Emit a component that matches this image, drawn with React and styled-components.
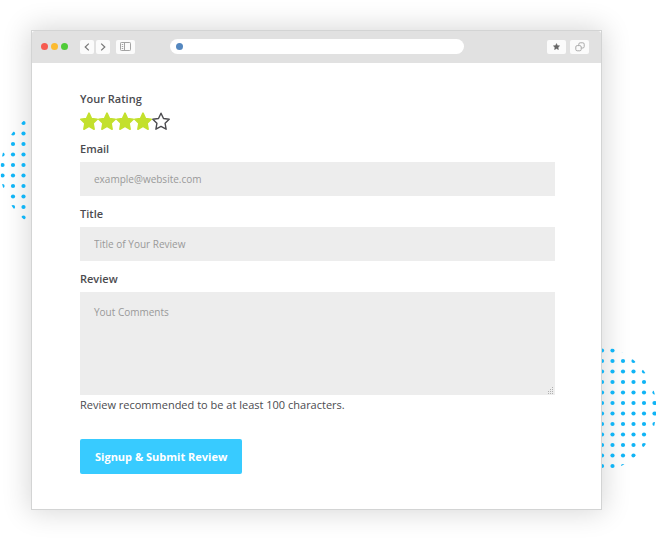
import React, { useState } from "react";
import styled, { createGlobalStyle } from "styled-components";

const GlobalStyle = createGlobalStyle`
  * {
    box-sizing: border-box;
  }

  body {
    margin: 0;
    background: #fff;
    color: #4b4b4f;
    font-family: "Open Sans", "Noto Sans", sans-serif;
    font-size: 11px;
    line-height: 16px;
  }

  button,
  input,
  textarea {
    font-family: inherit;
  }
`;

const Page = styled.main`
  padding: 30px 54px 30px 31px;
  overflow: hidden;
`;

const Frame = styled.div`
  position: relative;
  box-shadow: 0 0 26px 2px rgba(0, 0, 0, 0.16);
`;

const StyledDots = styled.svg`
  position: absolute;
  width: 128px;
  height: 128px;
  ${(props) =>
    props.$side === "left"
      ? "left: -31px; top: 76px;"
      : "right: -55px; bottom: 37px;"}
`;

const BrowserWindow = styled.section`
  position: relative;
  background: #fff;
  border: 1px solid #d3d4d4;
`;

const Toolbar = styled.header`
  display: flex;
  align-items: center;
  height: 32px;
  padding: 0 12px 1px 9px;
  background: #e1e1e1;
  border-radius: 3px 3px 0 0;
`;

const Lights = styled.div`
  display: flex;
  gap: 3px;
  margin-right: 12px;
`;

const Light = styled.span`
  width: 7px;
  height: 7px;
  border-radius: 50%;
  background: ${(props) => props.$color};
`;

const ToolGroup = styled.div`
  display: flex;
  gap: ${(props) => props.$gap}px;
  margin-right: ${(props) => props.$after || 0}px;
`;

const ToolButton = styled.button`
  display: flex;
  align-items: center;
  justify-content: center;
  width: ${(props) => (props.$wide ? 19 : 14)}px;
  height: 14px;
  padding: 0;
  border: 0;
  border-radius: 2px;
  background: #fbfbfb;
  color: #777;
`;

const AddressBar = styled.div`
  display: flex;
  flex: 1;
  align-items: center;
  height: 15px;
  margin: 0 83px 0 35px;
  padding: 0 6px;
  border-radius: 8px;
  background: #fff;
`;

const AddressInput = styled.input`
  flex: 1;
  min-width: 0;
  height: 15px;
  padding: 0 6px;
  border: 0;
  outline: 0;
  background: transparent;
  font-size: 10px;
`;

const ReviewForm = styled.form`
  display: flex;
  flex-direction: column;
  gap: 10px;
  padding: 28px 46px 35px 48px;
`;

const Field = styled.div`
  display: flex;
  flex-direction: column;
  gap: 5px;
`;

const RatingField = styled.fieldset`
  margin: 0;
  padding: 0;
  border: 0;
`;

const Label = styled.label`
  font-weight: 600;
`;

const Legend = styled.legend`
  margin-bottom: 5px;
  padding: 0;
  font-weight: 600;
`;

const Stars = styled.div`
  display: flex;
  height: 19px;
`;

const StarLabel = styled.label`
  display: block;
  position: relative;
  width: 18px;
  height: 19px;
  cursor: pointer;

  input {
    position: absolute;
    width: 18px;
    height: 18px;
    margin: 0;
    opacity: 0;
    cursor: pointer;
  }

  svg {
    display: block;
  }
`;

const TextInput = styled.input`
  width: 100%;
  height: 34px;
  padding: 0 14px;
  border: 0;
  border-radius: 0;
  background: #ededed;
  color: #4b4b4f;
  font-size: 10px;

  &::placeholder {
    color: #999;
    opacity: 1;
  }
`;

const TextArea = styled(TextInput)`
  display: block;
  height: 103px;
  padding: 13px 14px;
  line-height: 14px;
  resize: none;
`;

const TextAreaBox = styled.div`
  position: relative;
`;

const Grip = styled.svg`
  position: absolute;
  right: 1px;
  bottom: 1px;
`;

const Hint = styled.p`
  margin: -3px 0 0;
`;

const SubmitButton = styled.button`
  align-self: flex-start;
  height: 35px;
  margin-top: 16px;
  padding: 0 15px;
  border: 0;
  border-radius: 2px;
  background: #38cbff;
  color: #fff;
  font-size: 11px;
  font-weight: 700;
  cursor: pointer;
`;

const DOT_STEP = 10.5;
const DOT_INDEXES = Array.from({ length: 13 }, (_, i) => i);

const DotCircle = ({ side, x, y }) => (
  <StyledDots $side={side} viewBox="0 0 128 128" aria-hidden="true">
    <clipPath id={`dots-${side}`}>
      <circle cx="64" cy="64" r="63.5" />
    </clipPath>
    <g clipPath={`url(#dots-${side})`} fill="#10b4f5">
      {DOT_INDEXES.map((row) =>
        DOT_INDEXES.map((col) => (
          <circle
            key={`${row}-${col}`}
            cx={x + col * DOT_STEP}
            cy={y + row * DOT_STEP}
            r="2.1"
          />
        ))
      )}
    </g>
  </StyledDots>
);

const STAR_PATH =
  "M9 1.2 L11.5 6.5 L17.2 7.3 L13.1 11.3 L14.1 17.2 L9 14.4 L3.9 17.2 L4.9 11.3 L0.8 7.3 L6.5 6.5 Z";

const Star = ({ filled }) => (
  <svg width="18" height="18" viewBox="0 0 18 18" aria-hidden="true">
    <path
      d={STAR_PATH}
      fill={filled ? "#c3e02d" : "none"}
      stroke={filled ? "#c3e02d" : "#4b4b4f"}
      strokeWidth={filled ? 1.6 : 1.4}
      strokeLinejoin="round"
    />
  </svg>
);

const Chevron = ({ d }) => (
  <svg width="8" height="10" viewBox="0 0 8 10" aria-hidden="true">
    <path d={d} fill="none" stroke="currentColor" strokeWidth="1.2" />
  </svg>
);

const BrowserToolbar = () => (
  <Toolbar>
    <Lights>
      <Light $color="#f65b50" />
      <Light $color="#fcbb30" />
      <Light $color="#4fcb37" />
    </Lights>
    <ToolGroup $gap={2} $after={6}>
      <ToolButton type="button" aria-label="Back">
        <Chevron d="M5.8 1.6 L2.2 5 L5.8 8.4" />
      </ToolButton>
      <ToolButton type="button" aria-label="Forward">
        <Chevron d="M2.2 1.6 L5.8 5 L2.2 8.4" />
      </ToolButton>
    </ToolGroup>
    <ToolButton type="button" $wide aria-label="Sidebar">
      <svg width="11" height="9" viewBox="0 0 11 9" fill="none" stroke="#a3a3a3">
        <rect x="0.5" y="0.5" width="10" height="8" rx="0.8" />
        <path d="M4.5 0.5 V8.5 M1.8 2.5 H3.2 M1.8 4.5 H3.2 M1.8 6.5 H3.2" />
      </svg>
    </ToolButton>
    <AddressBar>
      <Light $color="#5487bf" />
      <AddressInput type="text" aria-label="Address" />
    </AddressBar>
    <ToolGroup $gap={4}>
      <ToolButton type="button" $wide aria-label="Bookmark">
        <svg width="7" height="7" viewBox="0 0 18 18" fill="#666">
          <path d={STAR_PATH} stroke="#666" />
        </svg>
      </ToolButton>
      <ToolButton type="button" $wide aria-label="Tabs">
        <svg width="10" height="10" viewBox="0 0 10 10" fill="none" stroke="#aaa">
          <rect x="3.8" y="0.8" width="5.4" height="5.2" rx="1.4" />
          <rect x="0.8" y="3.6" width="5.4" height="5.2" rx="1.4" fill="#fbfbfb" />
        </svg>
      </ToolButton>
    </ToolGroup>
  </Toolbar>
);

const Rating = ({ value, onChange }) => (
  <RatingField>
    <Legend>Your Rating</Legend>
    <Stars>
      {[1, 2, 3, 4, 5].map((n) => (
        <StarLabel key={n}>
          <input
            type="radio"
            name="rating"
            value={n}
            aria-label={`${n} of 5`}
            checked={value === n}
            onChange={() => onChange(n)}
          />
          <Star filled={n <= value} />
        </StarLabel>
      ))}
    </Stars>
  </RatingField>
);

const App = () => {
  const [rating, setRating] = useState(4);

  const onSubmit = (e) => {
    e.preventDefault();
  };

  return (
    <>
      <GlobalStyle />
      <Page>
        <Frame>
          <DotCircle side="left" x={2.5} y={6.5} />
          <DotCircle side="right" x={-0.5} y={5.5} />
          <BrowserWindow>
            <BrowserToolbar />
            <ReviewForm onSubmit={onSubmit}>
              <Rating value={rating} onChange={setRating} />
              <Field>
                <Label htmlFor="email">Email</Label>
                <TextInput
                  id="email"
                  type="email"
                  placeholder="example@website.com"
                />
              </Field>
              <Field>
                <Label htmlFor="title">Title</Label>
                <TextInput
                  id="title"
                  type="text"
                  placeholder="Title of Your Review"
                />
              </Field>
              <Field>
                <Label htmlFor="review">Review</Label>
                <TextAreaBox>
                  <TextArea as="textarea" id="review" placeholder="Yout Comments" />
                  <Grip width="7" height="7" viewBox="0 0 7 7" fill="#b0b0b0">
                    <path d="M5 0h1v1h-1z M3 2h1v1h-1z M5 2h1v1h-1z M1 4h1v1h-1z M3 4h1v1h-1z M5 4h1v1h-1z M1 6h1v1h-1z M3 6h1v1h-1z M5 6h1v1h-1z" />
                  </Grip>
                </TextAreaBox>
                <Hint>Review recommended to be at least 100 characters.</Hint>
              </Field>
              <SubmitButton type="submit">Signup &amp; Submit Review</SubmitButton>
            </ReviewForm>
          </BrowserWindow>
        </Frame>
      </Page>
    </>
  );
};

export default App;
